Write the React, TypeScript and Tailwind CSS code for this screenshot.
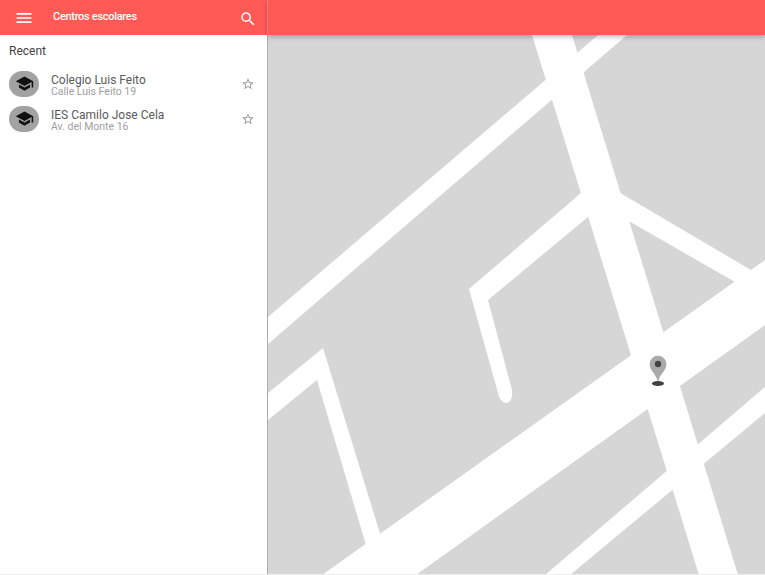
import { MdMenu, MdSchool, MdSearch, MdStarBorder } from "react-icons/md";

const schools = [
  { name: "Colegio Luis Feito", address: "Calle Luis Feito 19" },
  { name: "IES Camilo Jose Cela", address: "Av. del Monte 16" },
];

// road shapes, in page coordinates
const roads = [
  "532,35 572,35 738,575 699,575",
  "598,35 627,35 268,344 268,317",
  "765,260 765,325 416,575 322,575",
  "765,387 765,413 570,575 545,575",
  "610,187 751,270 735,282 620,216",
  "268,393 323,348 382,540 368,552 317,380 268,420",
];

const MapView = () => (
  <svg viewBox="268 35 497 539" className="block h-[539px] w-full bg-[#d6d6d6]">
    {roads.map((points) => (
      <polygon key={points} points={points} fill="#fff" />
    ))}
    <path
      d="M595 181 L469 289 L498 393 C501 407 514 406 512 390 L488 300 L600 207 Z"
      fill="#fff"
    />
    <ellipse cx="658" cy="383.5" rx="6" ry="2.6" fill="#404040" />
    <path
      d="M658 381 C656 373 650 371 650 364 A8 8 0 0 1 666 364 C666 371 660 373 658 381 Z"
      fill="#aaa"
      stroke="#969696"
      strokeWidth="0.5"
    />
    <circle cx="658" cy="364" r="3.2" fill="#444" />
  </svg>
);

export default function App() {
  return (
    <div className="flex h-[575px] w-[765px] overflow-hidden border-b border-[#eee] bg-white font-['Roboto',sans-serif]">
      <aside className="flex w-[268px] shrink-0 flex-col">
        <header className="flex h-[35px] shrink-0 items-center border-r border-[#f58d89] bg-[#ff5a55] pl-[14px] pr-[10px] text-white">
          <MdMenu size={20} />
          <span className="ml-[19px] text-[11px] font-medium tracking-[-0.3px]">Centros escolares</span>
          <MdSearch size={18} className="ml-auto translate-y-[1px]" />
        </header>
        <div className="flex-1 border-r border-[#acacac]">
          <p className="ml-[9px] mt-[7px] text-xs leading-[18px] text-[#444]">Recent</p>
          <ul className="mt-[11px] flex flex-col gap-[9px]">
            {schools.map((school) => (
              <li key={school.name} className="flex h-[26px] items-center pl-[9px] pr-[12px]">
                <div className="flex h-[26px] w-[30px] items-center justify-center rounded-full bg-[#a2a2a2]">
                  <MdSchool size={19} className="-translate-y-[1px] text-[#111]" />
                </div>
                <div className="ml-3 flex translate-y-[1px] flex-col">
                  <span className="text-xs leading-[12px] text-[#5a5a5a]">{school.name}</span>
                  <span className="text-[10.5px] leading-[11px] text-[#a0a0a0]">{school.address}</span>
                </div>
                <MdStarBorder size={14} className="ml-auto text-[#999]" />
              </li>
            ))}
          </ul>
        </div>
      </aside>
      <main className="flex min-w-0 flex-1 flex-col">
        <div className="relative z-10 h-[35px] shrink-0 bg-[#ff5a55] shadow-[0_2px_5px_rgba(0,0,0,0.26)]" />
        <MapView />
      </main>
    </div>
  );
}
